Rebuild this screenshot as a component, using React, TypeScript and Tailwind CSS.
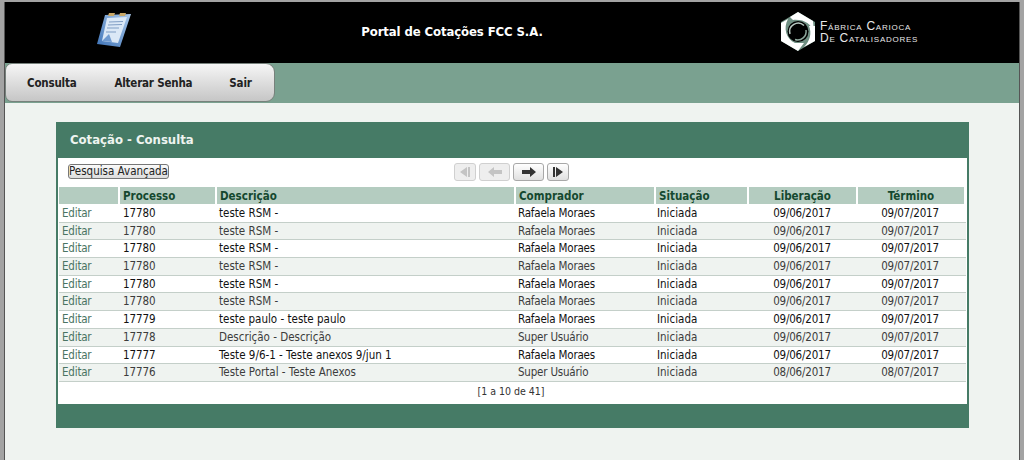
import React from 'react';

const rows = [
  ['17780', 'teste RSM -', 'Rafaela Moraes', '09/06/2017', '09/07/2017'],
  ['17780', 'teste RSM -', 'Rafaela Moraes', '09/06/2017', '09/07/2017'],
  ['17780', 'teste RSM -', 'Rafaela Moraes', '09/06/2017', '09/07/2017'],
  ['17780', 'teste RSM -', 'Rafaela Moraes', '09/06/2017', '09/07/2017'],
  ['17780', 'teste RSM -', 'Rafaela Moraes', '09/06/2017', '09/07/2017'],
  ['17780', 'teste RSM -', 'Rafaela Moraes', '09/06/2017', '09/07/2017'],
  ['17779', 'teste paulo - teste paulo', 'Rafaela Moraes', '09/06/2017', '09/07/2017'],
  ['17778', 'Descrição - Descrição', 'Super Usuário', '09/06/2017', '09/07/2017'],
  ['17777', 'Teste 9/6-1 - Teste anexos 9/jun 1', 'Rafaela Moraes', '09/06/2017', '09/07/2017'],
  ['17776', 'Teste Portal - Teste Anexos', 'Super Usuário', '08/06/2017', '08/07/2017'],
];

const headers = ['', 'Processo', 'Descrição', 'Comprador', 'Situação', 'Liberação', 'Término'];
const gridCols = 'grid grid-cols-[59px_2px_95px_2px_297px_2px_138px_2px_91px_2px_107px_2px_106px]';

function Clipboard() {
  return (
    <svg width="36" height="36" viewBox="0 0 36 36">
      <defs>
        <linearGradient id="clip" x1="0" y1="1" x2="1" y2="0">
          <stop offset="0" stopColor="#3f74b8" />
          <stop offset="1" stopColor="#a9c8ea" />
        </linearGradient>
      </defs>
      <polygon points="9,2 35,1 24,34 1,31" fill="url(#clip)" />
      <polygon points="11,5 31,4 22,30 6,28" fill="#dbe8f6" />
      <polygon points="13,0 19,0 18,3 12,3" fill="#c9a868" />
      <polygon points="24,0 30,0 29,3 23,3" fill="#c9a868" />
      <path d="M13 9 L27 8.5 M12 12 L26 11.5 M11 15 L23 15 M10 19 L20 19" stroke="#7f9dc4" strokeWidth="1" />
      <polygon points="6,28 13,21 16,29" fill="#6f9ad0" />
    </svg>
  );
}

function Logo() {
  return (
    <svg width="36" height="39" viewBox="0 0 36 39">
      <polygon points="18,0 35,10 35,29 18,39 1,29 1,10" fill="#6f8f82" />
      <path d="M18 0 L33 9 L34 20 C31 12 24 7 13 8 L10 5 Z" fill="#ffffff" />
      <path d="M35 14 L35 29 L24 35 C30 29 32 21 29 14 Z" fill="#ffffff" />
      <path d="M1 11 L8 7 C3 16 6 27 15 31 L24 31 L18 39 L1 29 Z" fill="#ffffff" />
      <circle cx="18" cy="19.5" r="10.5" fill="#000000" />
      <path d="M10 22 A8.5 8.5 0 0 1 24 13.5" fill="none" stroke="#b9c9c2" strokeWidth="1.5" />
      <path d="M26 18 A8.5 8.5 0 0 1 15 27.5" fill="none" stroke="#8ea89c" strokeWidth="1.5" />
    </svg>
  );
}

function PagerButton({ kind, disabled, wide }: { kind: 'first' | 'prev' | 'next' | 'last'; disabled?: boolean; wide?: boolean }) {
  const color = disabled ? '#c4c4c4' : '#333333';
  return (
    <div
      className={`${wide ? 'w-[31px]' : 'w-[22px]'} h-[18px] rounded-[3px] border flex items-center justify-center ${
        disabled ? 'border-[#d0d0d0] bg-[#eeeeee]' : 'border-[#a8a8a8] bg-gradient-to-b from-white to-[#e0e0e0]'
      }`}
    >
      <svg width="16" height="12" viewBox="0 0 16 12" fill={color}>
        {kind === 'first' && <path d="M3 6 L10 1 L10 11 Z M11 1 H13 V11 H11 Z" />}
        {kind === 'prev' && <path d="M1 6 L7 1 V4 H15 V8 H7 V11 Z" />}
        {kind === 'next' && <path d="M15 6 L9 1 V4 H1 V8 H9 V11 Z" />}
        {kind === 'last' && <path d="M13 6 L6 1 L6 11 Z M3 1 H5 V11 H3 Z" />}
      </svg>
    </div>
  );
}

export default function App() {
  return (
    <div className="h-[460px] w-[1024px] overflow-hidden bg-[#a3a3a3] pt-[2px] pl-[4px] pr-[4px] font-['DejaVu_Sans_Condensed','DejaVu_Sans',sans-serif] text-[11.5px]">
      <div className="h-[458px] border-x border-[#555555] bg-[#eff3f0]">
        {/* Header */}
        <div className="flex h-[61px] items-center bg-black">
          <div className="ml-[91px] mb-[3px] w-[36px]">
            <Clipboard />
          </div>
          <div className="ml-[225px] mb-[1px] w-[190px] whitespace-nowrap text-center text-[13px] tracking-[-0.1px] font-bold text-white">
            Portal de Cotações FCC S.A.
          </div>
          <div className="ml-[233px] mb-[2px] flex items-center gap-[4px]">
            <Logo />
            <div className="whitespace-nowrap font-['Liberation_Sans',sans-serif] text-[12px] leading-[12px] tracking-[0.75px] [font-variant:small-caps] text-[#e8e8e8]">
              <div>Fábrica Carioca</div>
              <div>De Catalisadores</div>
            </div>
          </div>
        </div>

        {/* Menu */}
        <div className="h-[40px] bg-[#7aa190]">
          <div className="flex h-[39px] w-[270px] items-center whitespace-nowrap rounded-r-[9px] rounded-l-[7px] border border-[#77817c] bg-gradient-to-b from-[#f6f6f6] to-[#c6c6c6] pt-[3px] pl-[21px] text-[11.5px] tracking-[-0.2px] font-bold text-[#222222]">
            <span>Consulta</span>
            <span className="ml-[38px]">Alterar Senha</span>
            <span className="ml-[37px]">Sair</span>
          </div>
        </div>

        {/* Panel */}
        <div className="ml-[51px] mt-[19px] w-[913px] bg-[#467b66] pb-[24px]">
          <div className="flex h-[36px] items-center pl-[14px] text-[13px] font-bold text-[#eef4f0]">
            Cotação - Consulta
          </div>
          <div className="mx-[2px] h-[246px] bg-white px-[1px]">
            <div className="relative h-[29px] pt-[6px]">
              <button className="ml-[9px] block h-[15px] w-[101px] whitespace-nowrap rounded-[3px] border border-[#777777] bg-gradient-to-b from-[#fafafa] to-[#dddddd] text-left text-[11.5px] leading-[13px] text-[#222222]">
                Pesquisa Avançada
              </button>
              <div className="absolute left-[395px] top-[5px] flex gap-[3px]">
                <PagerButton kind="first" disabled />
                <PagerButton kind="prev" disabled wide />
                <PagerButton kind="next" wide />
                <PagerButton kind="last" />
              </div>
            </div>

            {/* Table */}
            <div className={`${gridCols} mb-[1px]`}>
              {headers.map((h, i) => (
                <React.Fragment key={i}>
                  {i > 0 && <div />}
                  <div
                    className={`h-[17px] bg-[#b4ccc0] text-[11.5px] leading-[18px] font-bold text-[#14482f] ${
                      i >= 5 ? 'text-center' : 'pl-[3px]'
                    }`}
                  >
                    {h}
                  </div>
                </React.Fragment>
              ))}
            </div>
            {rows.map((r, i) => (
              <div
                key={i}
                className={`${gridCols} h-[17.7px] items-center border-b border-[#c4cfc9] leading-[17px] ${
                  i % 2 === 0 ? 'bg-white text-[#111111]' : 'bg-[#eff3f0] text-[#3c3c3c]'
                }`}
              >
                <div className="pl-[3px] tracking-[-0.2px] text-[#4a7463]">Editar</div>
                <div />
                <div className="pl-[3px] tracking-[-0.1px]">{r[0]}</div>
                <div />
                <div className="pl-[2px]">{r[1]}</div>
                <div />
                <div className="pl-[2px] tracking-[-0.2px]">{r[2]}</div>
                <div />
                <div className="pl-[1px]">Iniciada</div>
                <div />
                <div className="pr-[1px] text-center tracking-[-0.2px]">{r[3]}</div>
                <div />
                <div className="pr-[2px] text-center tracking-[-0.2px]">{r[4]}</div>
              </div>
            ))}
            <div className="pt-[2px] pr-[3px] text-center text-[10.5px] text-[#333333]">[1 a 10 de 41]</div>
          </div>
        </div>
      </div>
    </div>
  );
}
